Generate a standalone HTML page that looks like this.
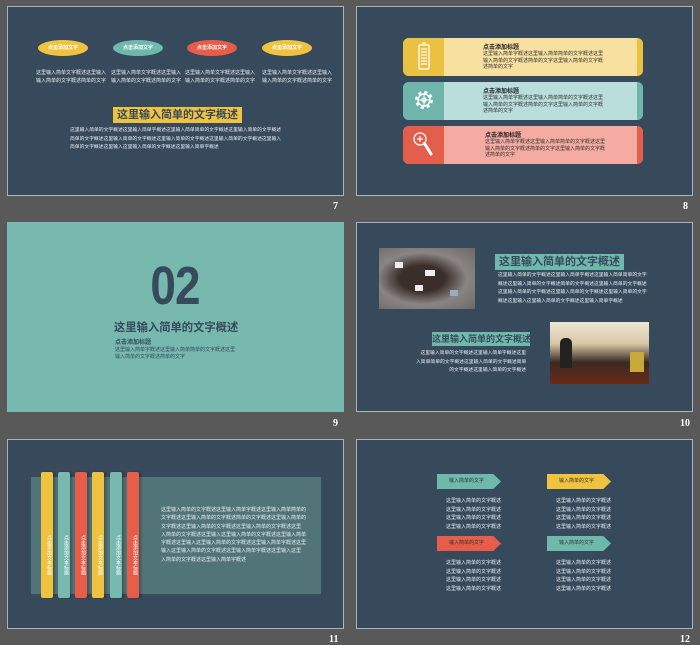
<!DOCTYPE html>
<html><head><meta charset="utf-8"><style>
*{margin:0;padding:0;box-sizing:border-box}
body{width:700px;height:644px;background:#595959;position:relative;overflow:hidden;font-family:"Liberation Sans","Noto Sans CJK SC",sans-serif}
.a{position:absolute}
.s{position:absolute;background:#374a5c;border:1px solid #a9b3bd}
.n{position:absolute;color:#fff;font:bold 10px "Liberation Serif",serif}
.t{position:absolute;font-size:5px;line-height:8px;color:#e8ecef;white-space:nowrap}
.tk{color:#333}
.ov{position:absolute;width:50px;height:16px;border-radius:50%;color:#fff;font-size:5px;font-weight:bold;text-align:center;line-height:16px}
.rw{position:absolute;left:403px;width:240px;height:38px;border-radius:6px;overflow:hidden}
.rw .ic{position:absolute;left:0;top:0;width:41px;height:100%}
.rw .ed{position:absolute;right:0;top:0;width:6px;height:100%}
.rib{position:absolute;top:472px;width:12px;height:126px;border-radius:2px;color:#fff;font-size:5px;writing-mode:vertical-rl;text-align:center;padding-top:40px;box-shadow:2px 0 2px rgba(0,0,0,.25)}
.tag{position:absolute;height:15px;font-size:5px;color:#333;line-height:15px;padding-left:12px;clip-path:polygon(0 0,88% 0,100% 50%,88% 100%,0 100%)}
</style></head><body>

<!-- slide 7 -->
<div class="s" style="left:7px;top:6px;width:337px;height:190px"></div>
<div class="ov" style="left:38px;top:40px;background:#efc23f">点击添加文字</div>
<div class="ov" style="left:113px;top:40px;background:#6fb8ac">点击添加文字</div>
<div class="ov" style="left:187px;top:40px;background:#e85c4a">点击添加文字</div>
<div class="ov" style="left:262px;top:40px;background:#efc23f">点击添加文字</div>
<div class="t" style="left:36px;top:69px">这里输入简单文字概述这里输入<br>输入简单的文字概述简单的文字</div>
<div class="t" style="left:111px;top:69px">这里输入简单文字概述这里输入<br>输入简单的文字概述简单的文字</div>
<div class="t" style="left:185px;top:69px">这里输入简单文字概述这里输入<br>输入简单的文字概述简单的文字</div>
<div class="t" style="left:262px;top:69px">这里输入简单文字概述这里输入<br>输入简单的文字概述简单的文字</div>
<div class="a" style="left:113px;top:107px;width:129px;height:16px;background:#efc23f;color:#374a5c;font-size:11px;font-weight:bold;line-height:16px;text-align:center;white-space:nowrap">这里输入简单的文字概述</div>
<div class="t" style="left:70px;top:127px;line-height:8.5px;font-size:4.8px">这里输入简单的文字概述这里输入简单字概述这里输入简单简单的文字概述这里输入简单的文字概述<br>简单的文字概述这里输入简单的文字概述这里输入简单的文字概述这里输入简单的文字概述这里输入<br>简单的文字概述这里输入这里输入简单的文字概述这里输入简单字概述</div>
<div class="n" style="left:333px;top:201px">7</div>

<!-- slide 8 -->
<div class="s" style="left:356px;top:6px;width:337px;height:190px"></div>
<div class="rw" style="top:38px;background:#f8e0a0"><div class="ic" style="background:#ebc141"></div><div class="ed" style="background:#ebc141"></div></div>
<div class="rw" style="top:82px;background:#b9dedb"><div class="ic" style="background:#6fb5ab"></div><div class="ed" style="background:#6fb5ab"></div></div>
<div class="rw" style="top:126px;background:#f4aba1"><div class="ic" style="background:#e45e4c"></div><div class="ed" style="background:#e45e4c"></div></div>
<svg class="a" style="left:403px;top:38px" width="41" height="125" viewBox="0 0 41 125">
<g fill="none" stroke="#fff" stroke-width="1.3"><rect x="16" y="7" width="10" height="24" rx="1"/><line x1="19" y1="5" x2="23" y2="5"/></g>
<g stroke="#fff" stroke-width="1.2"><line x1="18" y1="11" x2="24" y2="11"/><line x1="18" y1="14" x2="24" y2="14"/><line x1="18" y1="17" x2="24" y2="17"/><line x1="18" y1="20" x2="24" y2="20"/><line x1="18" y1="23" x2="24" y2="23"/><line x1="18" y1="26" x2="24" y2="26"/></g>
<g transform="translate(21,62)" fill="none" stroke="#fff"><circle r="7.5" stroke-width="3" stroke-dasharray="3 2.9"/><circle r="6" stroke-width="1.4"/><circle r="2" stroke-width="1.2"/><line x1="-6" y1="0" x2="6" y2="0" stroke-width="1"/><line x1="0" y1="-6" x2="0" y2="6" stroke-width="1"/></g>
<g fill="none" stroke="#fff"><circle cx="17" cy="101" r="6" stroke-width="1.3"/><line x1="14" y1="101" x2="20" y2="101" stroke-width="1.2"/><line x1="17" y1="98" x2="17" y2="104" stroke-width="1.2"/><line x1="21.5" y1="105.5" x2="28" y2="116" stroke-width="3" stroke-linecap="round"/></g>
</svg>
<div class="a" style="left:483px;top:42px;font-size:6px;font-weight:bold;color:#222">点击添加标题</div>
<div class="t tk" style="left:483px;top:51px;line-height:6.5px">这里输入简单字概述这里输入简单简单的文字概述这里<br>输入简单的文字概述简单的文字这里输入简单的文字概<br>述简单的文字</div>
<div class="a" style="left:483px;top:86px;font-size:6px;font-weight:bold;color:#222">点击添加标题</div>
<div class="t tk" style="left:483px;top:95px;line-height:6.5px">这里输入简单字概述这里输入简单简单的文字概述这里<br>输入简单的文字概述简单的文字这里输入简单的文字概<br>述简单的文字</div>
<div class="a" style="left:485px;top:130px;font-size:6px;font-weight:bold;color:#222">点击添加标题</div>
<div class="t tk" style="left:485px;top:139px;line-height:6.5px">这里输入简单字概述这里输入简单简单的文字概述这里<br>输入简单的文字概述简单的文字这里输入简单的文字概<br>述简单的文字</div>
<div class="n" style="left:683px;top:201px">8</div>

<!-- slide 9 -->
<div class="a" style="left:7px;top:222px;width:337px;height:190px;background:#77b9ae"></div>
<div class="a" style="left:146px;top:258px;width:58px;font:bold 54px/56px 'Liberation Sans Narrow','Liberation Sans',sans-serif;color:#364a5c;transform:scaleX(.85);letter-spacing:-1px">02</div>
<div class="a" style="left:114px;top:319px;font-size:11.3px;font-weight:bold;color:#364a5c;white-space:nowrap">这里输入简单的文字概述</div>
<div class="a" style="left:115px;top:337px;font-size:6px;font-weight:bold;color:#364a5c">点击添加标题</div>
<div class="t" style="left:115px;top:347px;color:#364a5c;line-height:6.5px">这里输入简单字概述这里输入简单简单的文字概述这里<br>输入简单的文字概述简单的文字</div>
<div class="n" style="left:333px;top:418px">9</div>

<!-- slide 10 -->
<div class="s" style="left:356px;top:222px;width:337px;height:190px"></div>
<div class="a" style="left:379px;top:248px;width:96px;height:61px;background:radial-gradient(ellipse at 45% 50%,#3a2e2a 30%,#8a8583 60%,#6d6866)"></div>
<div class="a" style="left:395px;top:262px;width:8px;height:6px;background:#eee"></div><div class="a" style="left:425px;top:270px;width:10px;height:6px;background:#eee"></div><div class="a" style="left:415px;top:285px;width:8px;height:6px;background:#eee"></div><div class="a" style="left:450px;top:290px;width:8px;height:6px;background:#9ac"></div>
<div class="a" style="left:495px;top:254px;width:129px;height:16px;background:#6fb8ac;color:#364a5c;font-size:11px;font-weight:bold;line-height:16px;text-align:center;white-space:nowrap">这里输入简单的文字概述</div>
<div class="t" style="left:498px;top:272px;line-height:8.5px;font-size:4.8px">这里输入简单的文字概述这里输入简单字概述这里输入简单简单的文字<br>概述这里输入简单的文字概述简单的文字概述这里输入简单的文字概述<br>这里输入简单的文字概述这里输入简单的文字概述这里输入简单的文字<br>概述这里输入这里输入简单的文字概述这里输入简单字概述</div>
<div class="a" style="left:432px;top:332px;width:98px;height:14px;background:#6fb8ac;color:#364a5c;font-size:9px;font-weight:bold;line-height:14px;text-align:center;white-space:nowrap">这里输入简单的文字概述</div>
<div class="t" style="left:416px;top:350px;text-align:right;width:110px;line-height:8.5px;font-size:4.8px">这里输入简单的文字概述这里输入简单字概述这里<br>入简单简单的文字概述这里输入简单的文字概述简单<br>的文字概述这里输入简单的文字概述</div>
<div class="a" style="left:550px;top:322px;width:99px;height:62px;background:linear-gradient(180deg,#efe6d3 0%,#d8c6a6 35%,#3a2a22 65%,#6a2a18 100%)"></div>
<div class="a" style="left:560px;top:338px;width:12px;height:30px;background:#222;border-radius:5px 5px 0 0"></div><div class="a" style="left:630px;top:352px;width:14px;height:20px;background:#c9a83a"></div>
<div class="n" style="left:680px;top:418px">10</div>

<!-- slide 11 -->
<div class="s" style="left:7px;top:439px;width:337px;height:190px"></div>
<div class="a" style="left:31px;top:477px;width:290px;height:117px;background:#517478"></div>
<div class="rib" style="left:41px;background:#efc23f">点击添加文本标题</div>
<div class="rib" style="left:58px;background:#77b9ae">点击添加文本标题</div>
<div class="rib" style="left:75px;background:#e85c4a">点击添加文本标题</div>
<div class="rib" style="left:92px;background:#efc23f">点击添加文本标题</div>
<div class="rib" style="left:110px;background:#77b9ae">点击添加文本标题</div>
<div class="rib" style="left:127px;background:#e85c4a">点击添加文本标题</div>
<div class="t" style="left:161px;top:506px;line-height:8.3px">这里输入简单的文字概述这里输入简单字概述这里输入简单简单的<br>文字概述这里输入简单的文字概述简单的文字概述这里输入简单的<br>文字概述这里输入简单的文字概述这里输入简单的文字概述这里<br>入简单的文字概述这里输入这里输入简单的文字概述这里输入简单<br>字概述这里输入这里输入简单的文字概述这里输入简单字概述这里<br>输入这里输入简单的文字概述这里输入简单字概述这里输入这里<br>入简单的文字概述这里输入简单字概述</div>
<div class="n" style="left:329px;top:634px">11</div>

<!-- slide 12 -->
<div class="s" style="left:356px;top:439px;width:337px;height:190px"></div>
<div class="tag" style="left:437px;top:474px;width:64px;background:#6fb8ac">输入简单的文字</div>
<div class="tag" style="left:547px;top:474px;width:64px;background:#efc23f">输入简单的文字</div>
<div class="tag" style="left:437px;top:536px;width:64px;background:#e85c4a">输入简单的文字</div>
<div class="tag" style="left:547px;top:536px;width:64px;background:#6fb8ac">输入简单的文字</div>
<div class="t" style="left:446px;top:497px;line-height:8.6px">这里输入简单的文字概述<br>这里输入简单的文字概述<br>这里输入简单的文字概述<br>这里输入简单的文字概述</div>
<div class="t" style="left:556px;top:497px;line-height:8.6px">这里输入简单的文字概述<br>这里输入简单的文字概述<br>这里输入简单的文字概述<br>这里输入简单的文字概述</div>
<div class="t" style="left:446px;top:559px;line-height:8.6px">这里输入简单的文字概述<br>这里输入简单的文字概述<br>这里输入简单的文字概述<br>这里输入简单的文字概述</div>
<div class="t" style="left:556px;top:559px;line-height:8.6px">这里输入简单的文字概述<br>这里输入简单的文字概述<br>这里输入简单的文字概述<br>这里输入简单的文字概述</div>
<div class="n" style="left:680px;top:634px">12</div>
</body></html>
